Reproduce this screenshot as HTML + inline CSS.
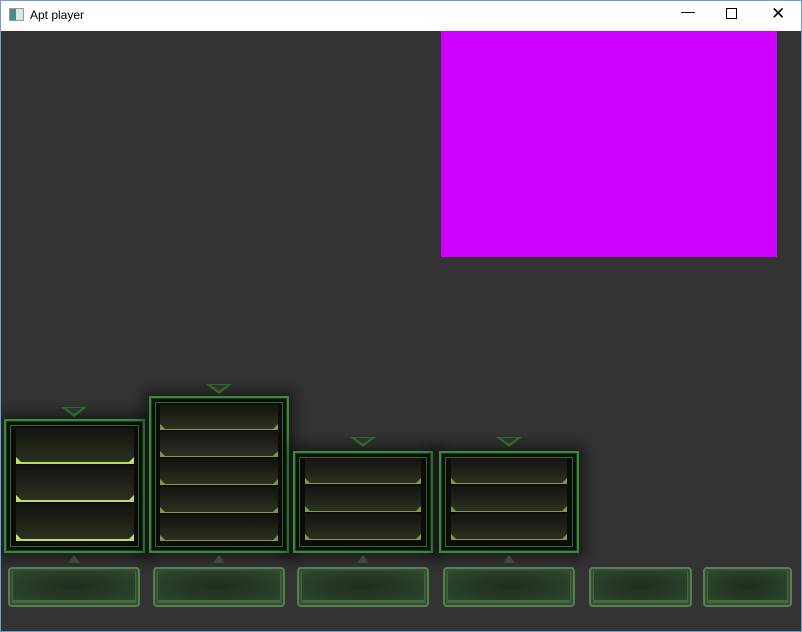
<!DOCTYPE html>
<html><head><meta charset="utf-8"><style>
*{margin:0;padding:0;box-sizing:border-box}
body{width:802px;height:632px;overflow:hidden;background:#333;position:relative;font-family:"Liberation Sans",sans-serif}
.win{position:absolute;left:0;top:0;width:802px;height:632px;border:1px solid #6d9fd5;pointer-events:none;z-index:10}
.title{position:absolute;left:0;top:0;width:802px;height:31px;background:#fff}
.title .t{position:absolute;left:30px;top:8px;font-size:12px;color:#000}
.ico{position:absolute;left:9px;top:8px;width:15px;height:13px;border:1px solid #999;background:linear-gradient(90deg,#4a8a8a 0 45%,#d8e4e4 45%)}
.ctl{position:absolute;top:6px;font-size:14px;color:#000}
.mag{position:absolute;left:441px;top:31px;width:336px;height:226px;background:#cc00ff}
.panel{position:absolute;border:2px solid #3a8a3a;background:#0c0d0b;box-shadow:0 0 12px 6px rgba(0,0,0,.45),inset 0 0 0 1px #1c3a1a,inset 0 0 0 4px #0c0d0b,inset 0 0 0 5px #2a6e2c}
.slot{position:absolute;background:linear-gradient(#131411,#2b3120);border-bottom:1px solid #7e9a4e}
.slot.y{border-bottom:2px solid #c0dc68}
.slot:before,.slot:after{content:"";position:absolute;bottom:0;width:0;height:0;border-bottom:5px solid #7e9850}
.slot:before{left:0;border-right:5px solid transparent}
.slot:after{right:0;border-left:5px solid transparent}
.slot.y:before,.slot.y:after{border-bottom-color:#c8e26c}
.tri{position:absolute;width:0;height:0;border-left:13px solid transparent;border-right:13px solid transparent;border-top:10px solid #2c6a2a}
.tri:after{content:"";position:absolute;left:-8px;top:-9px;border-left:8px solid transparent;border-right:8px solid transparent;border-top:6px solid #303230}
.up{position:absolute;width:0;height:0;border-left:6px solid transparent;border-right:6px solid transparent;border-bottom:8px solid #3d4a3b}
.btn{position:absolute;top:567px;height:40px;border:2px solid #5b7d55;border-radius:4px;background:radial-gradient(ellipse at center,#1d2f1e,#2c442b 80%,#365234);box-shadow:inset 0 0 0 2px #34502f,inset 0 -2px 0 3px #44683f}
</style></head><body>
<div class="title"><div class="ico"></div><div class="t">Apt player</div>
<div class="ctl" style="left:681px;top:3px">&#8212;</div>
<div class="ctl" style="left:726px;top:8px;width:11px;height:11px;border:1px solid #000"></div>
<div class="ctl" style="left:771px;top:4px;font-size:17px">&#10005;</div></div>
<div class="mag"></div>

<div class="panel" style="left:4px;top:419px;width:141px;height:134px"></div>
<div class="tri" style="left:61px;top:407px"></div>
<div class="slot y" style="left:16px;top:428px;width:118px;height:36px"></div>
<div class="slot y" style="left:16px;top:466px;width:118px;height:36px"></div>
<div class="slot y" style="left:16px;top:504px;width:118px;height:37px"></div>

<div class="panel" style="left:149px;top:396px;width:140px;height:157px"></div>
<div class="tri" style="left:206px;top:384px"></div>
<div class="slot" style="left:160px;top:404px;width:118px;height:26px"></div>
<div class="slot" style="left:160px;top:431px;width:118px;height:26px"></div>
<div class="slot" style="left:160px;top:459px;width:118px;height:26px"></div>
<div class="slot" style="left:160px;top:487px;width:118px;height:26px"></div>
<div class="slot" style="left:160px;top:515px;width:118px;height:26px"></div>

<div class="panel" style="left:293px;top:451px;width:140px;height:102px"></div>
<div class="tri" style="left:350px;top:437px"></div>
<div class="slot" style="left:305px;top:458px;width:116px;height:26px"></div>
<div class="slot" style="left:305px;top:486px;width:116px;height:26px"></div>
<div class="slot" style="left:305px;top:514px;width:116px;height:26px"></div>

<div class="panel" style="left:439px;top:451px;width:140px;height:102px"></div>
<div class="tri" style="left:496px;top:437px"></div>
<div class="slot" style="left:451px;top:458px;width:116px;height:26px"></div>
<div class="slot" style="left:451px;top:486px;width:116px;height:26px"></div>
<div class="slot" style="left:451px;top:514px;width:116px;height:26px"></div>

<div class="up" style="left:68px;top:555px"></div>
<div class="up" style="left:213px;top:555px"></div>
<div class="up" style="left:357px;top:555px"></div>
<div class="up" style="left:503px;top:555px"></div>

<div class="btn" style="left:8px;width:132px"></div>
<div class="btn" style="left:153px;width:132px"></div>
<div class="btn" style="left:297px;width:132px"></div>
<div class="btn" style="left:443px;width:132px"></div>
<div class="btn" style="left:589px;width:103px"></div>
<div class="btn" style="left:703px;width:89px"></div>
<div class="win"></div>
</body></html>
